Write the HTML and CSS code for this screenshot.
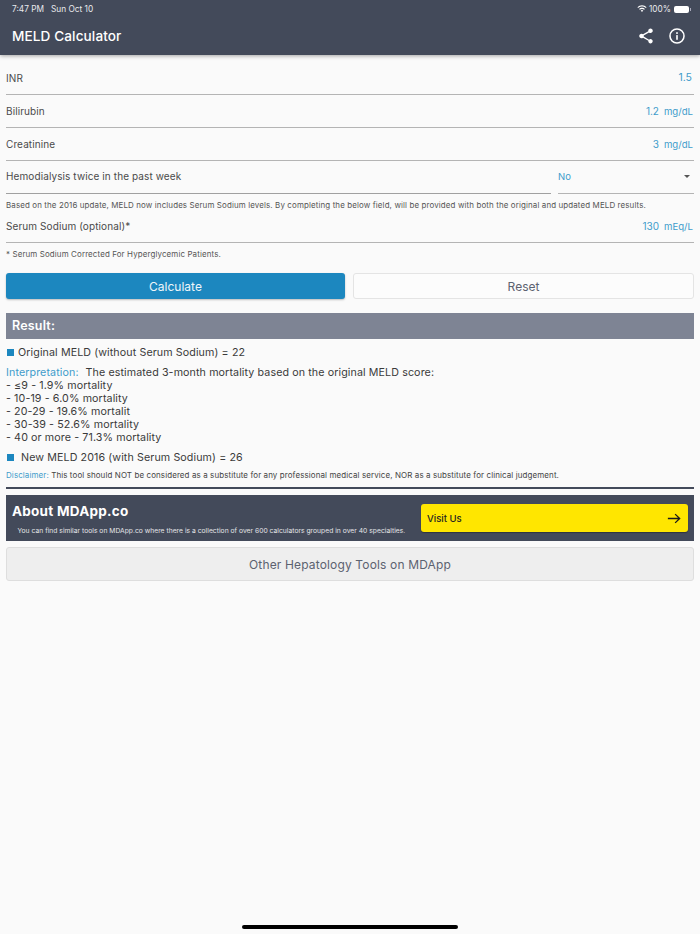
FILE: index.html
```html
<!DOCTYPE html>
<html lang="en">
<head>
<meta charset="utf-8">
<title>MELD Calculator</title>
<link rel="stylesheet" href="styles.css">
</head>
<body>
<div class="page">
  <header class="appbar">
    <div class="status">
      <span class="status-left"><span>7:47 PM</span><span>Sun Oct 10</span></span>
      <span class="status-right">
        <svg class="wifi" width="10" height="8" viewBox="0 0 24 18"><path fill="#fff" d="M12 3.200c3.500 0 6.700 1.300 9.100 3.600l1.900-2C20.100 2 16.200 0 12 0S3.900 2 1 4.800l1.900 2C5.300 4.500 8.500 3.200 12 3.200zM12 9c1.900 0 3.700.7 5 2l2-2.100C17.100 7 14.700 5.800 12 5.800S6.900 7 5 8.900L7 11c1.300-1.300 3.100-2 5-2zM12 11.500c-1.200 0-2.300.5-3.100 1.300L12 16l3.100-3.200c-.8-.8-1.900-1.300-3.100-1.300z"/></svg>
        <span>100%</span>
        <span class="battery"><span class="battery-fill"></span></span>
      </span>
    </div>
    <div class="toolbar">
      <h1 class="title">MELD Calculator</h1>
      <div class="actions">
        <svg width="18" height="18" viewBox="0 0 24 24"><path fill="#fff" d="M18 16.080c-.76 0-1.440.3-1.960.77L8.910 12.700c.05-.23.09-.46.09-.7s-.04-.47-.09-.7l7.050-4.110c.54.5 1.250.81 2.040.81 1.660 0 3-1.340 3-3s-1.340-3-3-3-3 1.340-3 3c0 .24.040.47.090.7L8.040 9.810C7.500 9.310 6.790 9 6 9c-1.660 0-3 1.340-3 3s1.340 3 3 3c.79 0 1.500-.31 2.040-.81l7.120 4.160c-.05.21-.08.43-.08.65 0 1.610 1.310 2.920 2.920 2.920s2.920-1.310 2.920-2.920-1.310-2.920-2.920-2.920z"/></svg>
        <svg width="18" height="18" viewBox="0 0 20 20"><circle cx="10" cy="10" r="7.800" fill="none" stroke="#fff" stroke-width="1.700"/><rect x="9.100" y="9" width="1.800" height="5.200" fill="#fff"/><rect x="9.100" y="5.800" width="1.800" height="1.900" fill="#fff"/></svg>
      </div>
    </div>
  </header>

  <main class="content">
    <div class="field"><span class="label">INR</span><span class="value">1.5</span></div>
    <div class="field"><span class="label">Bilirubin</span><span class="value value-unit">1.2<span class="unit">mg/dL</span></span></div>
    <div class="field"><span class="label">Creatinine</span><span class="value value-unit">3<span class="unit">mg/dL</span></span></div>
    <div class="select-row">
      <div class="select-label"><span class="label">Hemodialysis twice in the past week</span></div>
      <div class="select-box"><span class="value">No</span><span class="caret"></span></div>
    </div>
    <p class="note note-update">Based on the 2016 update, MELD now includes Serum Sodium levels. By completing the below field, will be provided with both the original and updated MELD results.</p>
    <div class="field field-sodium"><span class="label">Serum Sodium (optional)*</span><span class="value value-unit">130<span class="unit">mEq/L</span></span></div>
    <p class="note note-corrected">* Serum Sodium Corrected For Hyperglycemic Patients.</p>

    <div class="buttons">
      <button class="btn btn-primary" type="button">Calculate</button>
      <button class="btn btn-outline" type="button">Reset</button>
    </div>

    <h2 class="result-head">Result:</h2>
    <div class="result-line result-first"><span class="bullet"></span><span>Original MELD (without Serum Sodium) = 22</span></div>
    <div class="interp">
      <div><span class="accent">Interpretation:</span><span class="interp-text">The estimated 3-month mortality based on the original MELD score:</span></div>
      <div>- ≤9 - 1.9% mortality</div>
      <div>- 10-19 - 6.0% mortality</div>
      <div>- 20-29 - 19.6% mortalit</div>
      <div>- 30-39 - 52.6% mortality</div>
      <div>- 40 or more - 71.3% mortality</div>
    </div>
    <div class="result-line result-second"><span class="bullet"></span><span>New MELD 2016 (with Serum Sodium) = 26</span></div>
    <p class="disclaimer"><span class="accent">Disclaimer:</span> This tool should NOT be considered as a substitute for any professional medical service, NOR as a substitute for clinical judgement.</p>
    <hr class="rule">

    <section class="about">
      <div class="about-text">
        <h2 class="about-title">About MDApp.co</h2>
        <p class="about-desc">You can find similar tools on MDApp.co where there is a collection of over 600 calculators grouped in over 40 specialties.</p>
      </div>
      <a class="visit">
        <span>Visit Us</span>
        <svg width="14" height="11" viewBox="0 0 16 12"><path d="M1 6h13.500M9.300 1l5.200 5-5.200 5" fill="none" stroke="#1a1a1a" stroke-width="1.500"/></svg>
      </a>
    </section>
    <button class="other" type="button">Other Hepatology Tools on MDApp</button>
  </main>
  <div class="home-bar"></div>
</div>
</body>
</html>
```
FILE: styles.css
```css
* { box-sizing: border-box; }
html, body { margin: 0; padding: 0; }
body {
  width: 700px;
  height: 934px;
  overflow: hidden;
  background: #fafafa;
  font-family: Inter, "Liberation Sans", sans-serif;
  color: #444;
}
.page { position: relative; width: 700px; height: 934px; }

.appbar {
  height: 55px;
  background: #434a5a;
  color: #fff;
  box-shadow: 0 1px 4px rgba(0,0,0,.35);
}
.status {
  height: 18px;
  padding: 0 11px 0 12px;
  display: flex;
  justify-content: space-between;
  align-items: center;
  font-size: 8.300px;
  color: #e8e9ec;
}
.status-left { display: flex; gap: 7px; }
.status-right { display: flex; align-items: center; gap: 2px; }
.battery {
  position: relative;
  width: 15px;
  height: 7px;
  margin-left: 1px;
  border-radius: 2px;
  background: #fff;
}
.battery::after {
  content: "";
  position: absolute;
  right: -2px;
  top: 2px;
  width: 1px;
  height: 3px;
  background: #aab;
}
.toolbar {
  height: 36px;
  padding: 0 14px 0 12px;
  display: flex;
  justify-content: space-between;
  align-items: center;
}
.title { margin: 0; font-size: 13.600px; font-weight: 500; letter-spacing: .1px; }
.actions { display: flex; gap: 13px; }

.content { padding: 0 6px; }
.field {
  height: 33px;
  display: flex;
  justify-content: space-between;
  align-items: center;
  border-bottom: 1px solid #b4b4b4;
}
.field:first-child { height: 40px; padding-top: 6px; }
.label { font-size: 10px; color: #4a4a4a; letter-spacing: .1px; }
.value { font-size: 10.500px; color: #3f9ccb; padding-right: 2px; }
.value-unit { font-size: 10px; padding-right: 1px; }
.unit { margin-left: 5px; font-size: 9.600px; }

.select-row { height: 33px; display: flex; gap: 7px; }
.select-label {
  flex: 1;
  display: flex;
  align-items: center;
  padding-bottom: 2px;
  border-bottom: 1px solid #a0a0a0;
}
.select-box {
  width: 136px;
  display: flex;
  justify-content: space-between;
  align-items: center;
  padding-bottom: 2px;
  border-bottom: 1px solid #b4b4b4;
}
.select-box .value { font-size: 9.500px; }
.caret {
  width: 0;
  height: 0;
  margin-right: 4px;
  border-left: 3px solid transparent;
  border-right: 3px solid transparent;
  border-top: 3px solid #555;
}
.note { margin: 0; font-size: 7.950px; color: #555; letter-spacing: .12px; }
.note-update { margin-top: 7px; line-height: 9px; }
.field-sodium { height: 33px; }
.note-corrected { margin-top: 7px; line-height: 9px; }

.buttons { display: flex; gap: 8px; margin-top: 14px; }
.btn {
  flex: 1 1 0;
  width: 0;
  height: 26px;
  border-radius: 3px;
  font-family: inherit;
  font-size: 12px;
  padding: 0;
}
.btn-primary { background: #1c87bf; color: #eef6fa; border: 0; box-shadow: 0 1px 2px rgba(0,0,0,.25); }
.btn-outline { background: #fcfcfc; color: #5c6270; border: 1px solid #e4e4e4; }

.result-head {
  height: 26px;
  margin: 14px 0 0;
  padding-left: 6px;
  background: #7e8494;
  color: #fff;
  font-size: 12.500px;
  font-weight: 600;
  line-height: 26px;
  letter-spacing: .2px;
}
.result-line { display: flex; align-items: center; font-size: 10.700px; color: #3a3a3a; letter-spacing: .1px; }
.result-first { margin-top: 6px; height: 14px; gap: 4px; }
.result-second { margin-top: 6px; height: 14px; gap: 7px; }
.bullet { width: 7px; height: 7px; margin-left: 1px; background: #1c87bf; }
.interp { margin-top: 7px; font-size: 10.700px; line-height: 13px; color: #3a3a3a; letter-spacing: .1px; }
.accent { color: #3f9ccb; }
.interp-text { margin-left: 7px; }
.disclaimer { margin: 6px 0 0; font-size: 7.970px; line-height: 10px; color: #444; letter-spacing: .1px; }
.rule { height: 2px; margin: 7px 0 0; border: 0; background: #434a5a; }

.about {
  height: 46px;
  margin-top: 6px;
  padding: 0 6px 0 6px;
  background: #434a5a;
  display: flex;
  justify-content: space-between;
  align-items: center;
}
.about-text { color: #fff; padding-top: 2px; }
.about-title { margin: 0; font-size: 13.500px; font-weight: 700; letter-spacing: .25px; line-height: 16px; }
.about-desc { margin: 8px 0 0 5.500px; font-size: 6.730px; line-height: 8px; color: #e4e5e8; letter-spacing: .02px; }
.visit {
  width: 267px;
  height: 28px;
  padding: 0 7px 0 6px;
  border-radius: 3px;
  background: #ffe600;
  color: #222;
  font-size: 9.500px;
  font-weight: 500;
  display: flex;
  justify-content: space-between;
  align-items: center;
  box-shadow: 0 1px 1px rgba(0,0,0,.3);
}
.other {
  display: block;
  width: 100%;
  height: 34px;
  margin-top: 6px;
  border: 1px solid #dedede;
  border-radius: 3px;
  background: #eeeeee;
  color: #5c6270;
  font-family: inherit;
  font-size: 12px;
  letter-spacing: .15px;
  padding: 0;
}
.home-bar {
  position: absolute;
  left: 242px;
  bottom: 5px;
  width: 216px;
  height: 4px;
  border-radius: 2px;
  background: #000;
}
```
